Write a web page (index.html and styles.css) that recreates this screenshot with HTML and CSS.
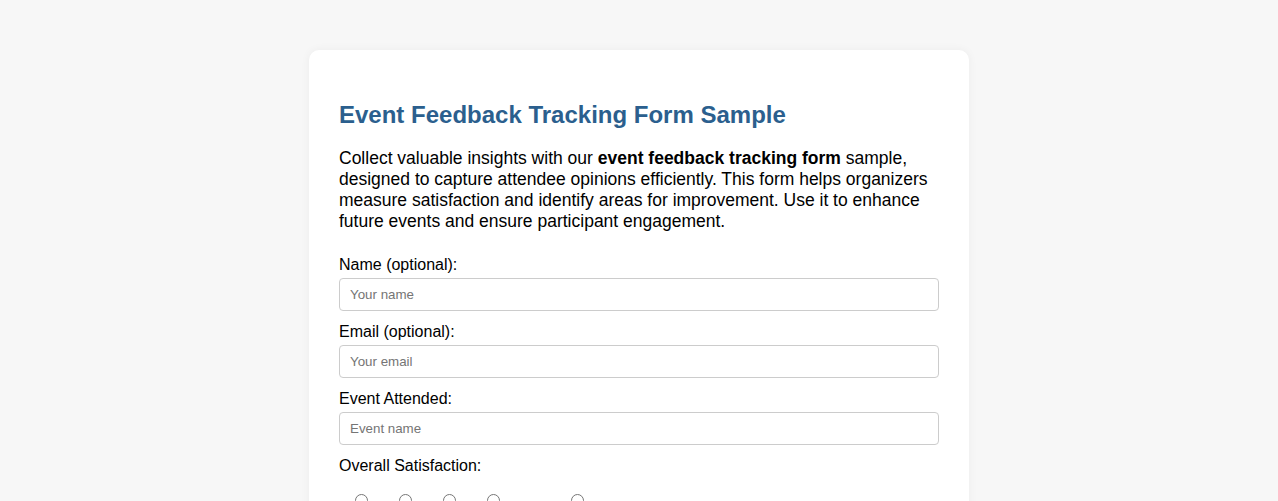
FILE: index.html
```html
<!DOCTYPE html>
<html lang="en">
<head>
<meta charset="utf-8">
<title>Event Feedback Tracking Form Sample</title>
<link rel="stylesheet" href="styles.css">
</head>
<body>
<main class="card">
  <h1 class="title">Event Feedback Tracking Form Sample</h1>
  <p class="intro">Collect valuable insights with our <strong>event feedback tracking form</strong> sample, designed to capture attendee opinions efficiently. This form helps organizers measure satisfaction and identify areas for improvement. Use it to enhance future events and ensure participant engagement.</p>
  <form class="form">
    <label class="label" for="name">Name (optional):</label>
    <input class="input" type="text" id="name" placeholder="Your name">
    <label class="label" for="email">Email (optional):</label>
    <input class="input" type="email" id="email" placeholder="Your email">
    <label class="label" for="event">Event Attended:</label>
    <input class="input" type="text" id="event" placeholder="Event name">
    <span class="label">Overall Satisfaction:</span>
    <div class="rating">
      <label class="option"><input type="radio" name="sat" value="1"><span class="option-text">1</span></label>
      <label class="option"><input type="radio" name="sat" value="2"><span class="option-text">2</span></label>
      <label class="option"><input type="radio" name="sat" value="3"><span class="option-text">3</span></label>
      <label class="option"><input type="radio" name="sat" value="4"><span class="option-text">4</span></label>
      <label class="option option-wide"><input type="radio" name="sat" value="5"><span class="option-text">5</span></label>
    </div>
  </form>
</main>
</body>
</html>
```
FILE: styles.css
```css
html, body {
  margin: 0;
  padding: 0;
}
body {
  background: #f7f7f7;
  font-family: "Liberation Sans", Arial, sans-serif;
  color: #000;
}
.card {
  width: 600px;
  margin: 50px auto 0;
  padding: 30px;
  background: #fff;
  border-radius: 10px;
  box-shadow: 0 0 10px rgba(0, 0, 0, 0.05);
}
.title {
  font-size: 24px;
  font-weight: bold;
  color: #2b5f8e;
  margin: 21px 0 19px;
}
.intro {
  font-size: 17.5px;
  line-height: 21px;
  margin: 0 0 23px;
}
.form {
  display: flex;
  flex-direction: column;
}
.label {
  font-size: 16px;
  padding-top: 1px;
  margin-bottom: 4px;
}
.input {
  font-family: "Liberation Sans", Arial, sans-serif;
  font-size: 13.33px;
  padding: 8px 10px;
  border: 1px solid #ccc;
  border-radius: 4px;
  margin: 0 0 11px;
}
.input::placeholder {
  color: #757575;
}
.rating {
  display: flex;
  margin-top: 12px;
}
.option {
  display: flex;
  flex-direction: column;
  align-items: center;
  width: 44px;
  font-size: 14px;
}
.option-wide {
  width: 125px;
}
.option input {
  margin: 3px 0 4px;
}
```
